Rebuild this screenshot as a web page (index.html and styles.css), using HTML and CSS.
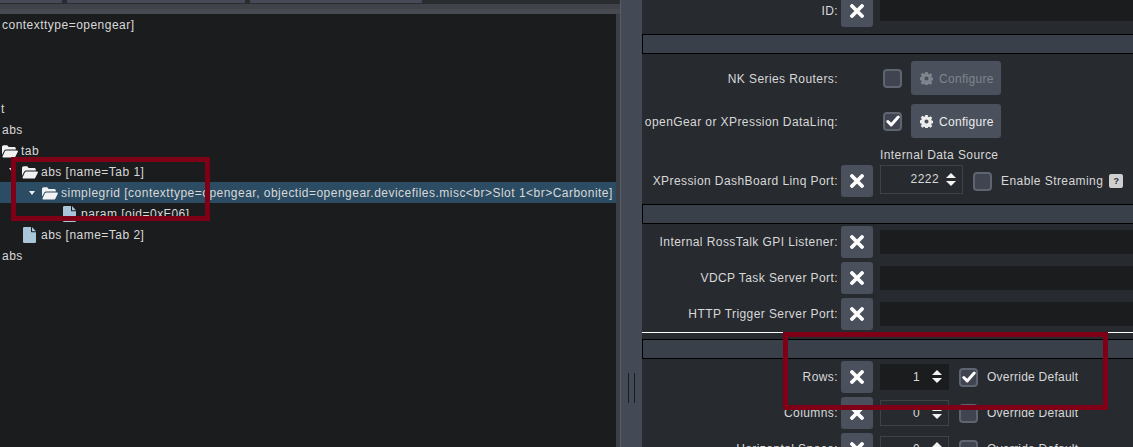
FILE: index.html
```html
<!DOCTYPE html>
<html lang="en">
<head>
<meta charset="utf-8">
<title>Layout editor</title>
<link rel="stylesheet" href="styles.css">
</head>
<body>
<svg class="defs" width="0" height="0" aria-hidden="true">
  <symbol id="x" viewBox="0 0 14 14"><path d="M2 2l10 10M12 2L2 12" fill="none" stroke="currentColor" stroke-width="3.8" stroke-linecap="round"/></symbol>
  <symbol id="check" viewBox="0 0 14 12"><path d="M1.8 6.5l3.4 3.4 7-7.8" fill="none" stroke="currentColor" stroke-width="3" stroke-linecap="round" stroke-linejoin="round"/></symbol>
  <symbol id="gear" viewBox="0 0 14 14"><path fill="currentColor" fill-rule="evenodd" d="M5.7 0h2.6l.4 2 1 .4 1.7-1.1 1.8 1.8-1.1 1.7.4 1 2 .4v2.6l-2 .4-.4 1 1.1 1.7-1.8 1.8-1.7-1.1-1 .4-.4 2H5.700l-.4-2-1-.4-1.700 1.100-1.800-1.800 1.100-1.700-.4-1-2-.4V5.700l2-.4.4-1-1.100-1.700 1.800-1.800 1.700 1.100 1-.4zM7 4.800a2.200 2.200 0 1 0 0 4.400 2.200 2.200 0 0 0 0-4.400z"/></symbol>
  <symbol id="open" viewBox="0 0 16 13"><path fill="currentColor" d="M0 2.200C0 1 .8.300 1.800.300h3.400l1.500 1.600h5.500c1 0 1.600.6 1.600 1.600v.9H4.200c-.9 0-1.500.4-1.900 1.100L0 9.700zM4.300 5.400H15c.8 0 1.200.7.800 1.300l-2.500 5c-.3.600-.8.9-1.500.9H1.500c-.8 0-1.200-.7-.9-1.300l2.300-5c.3-.6.800-.9 1.400-.9z"/></symbol>
  <symbol id="file" viewBox="0 0 13 16"><path fill="currentColor" d="M1.300 0H8v4.200c0 .6.400 1 1 1h4v9.500c0 .7-.6 1.300-1.300 1.300H1.300C.6 16 0 15.400 0 14.700V1.300C0 .6.600 0 1.300 0zM9 0l4 4.200H9z"/></symbol>
</svg>
<main class="app">
  <section class="left">
    <div class="tabs"><span class="tab t1"></span><span class="tab t2"></span><span class="tab t3"></span></div>
    <div class="band b1"></div>
    <div class="band b2"></div>
    <div class="tree">
      <div class="node">contexttype=opengear]</div>
      <div class="node"></div>
      <div class="node"></div>
      <div class="node"></div>
      <div class="node n-t">t</div>
      <div class="node">abs</div>
      <div class="node"><svg class="ico-open"><use href="#open"/></svg>tab</div>
      <div class="node lv1"><i class="arrow arrow-1"></i><svg class="ico-open"><use href="#open"/></svg>abs [name=Tab 1]</div>
      <div class="node lv2 sel"><i class="arrow"></i><svg class="ico-open"><use href="#open"/></svg>simplegrid [contexttype=opengear, objectid=opengear.devicefiles.misc&lt;br&gt;Slot 1&lt;br&gt;Carbonite]</div>
      <div class="node lv3"><svg class="ico-file"><use href="#file"/></svg>param [oid=0xF06]</div>
      <div class="node lv1f"><svg class="ico-file"><use href="#file"/></svg>abs [name=Tab 2]</div>
      <div class="node">abs</div>
    </div>
  </section>
  <div class="split"><div class="grip"></div></div>
  <section class="right">
    <div class="row r-id">
      <span class="label">ID:</span>
      <button class="xbtn"><svg><use href="#x"/></svg></button>
      <span class="field f-id"></span>
    </div>
    <div class="bar bar-1"></div>
    <div class="row r-cfg">
      <span class="label">NK Series Routers:</span>
      <span class="box box-cfg"></span>
      <button class="cfg off"><svg><use href="#gear"/></svg><span>Configure</span></button>
    </div>
    <div class="row r-cfg r-cfg2">
      <span class="label">openGear or XPression DataLinq:</span>
      <span class="box box-cfg"><svg><use href="#check"/></svg></span>
      <button class="cfg"><svg><use href="#gear"/></svg><span>Configure</span></button>
    </div>
    <div class="caption">Internal Data Source</div>
    <div class="row r-port">
      <span class="label">XPression DashBoard Linq Port:</span>
      <button class="xbtn"><svg><use href="#x"/></svg></button>
      <span class="num num-port">2222<i class="spin"></i></span>
      <span class="box box-port"></span>
      <span class="opt opt-wide">Enable Streaming</span>
      <span class="help">?</span>
    </div>
    <div class="bar bar-2"></div>
    <div class="row r-a">
      <span class="label">Internal RossTalk GPI Listener:</span>
      <button class="xbtn"><svg><use href="#x"/></svg></button>
      <span class="field"></span>
    </div>
    <div class="row r-b">
      <span class="label">VDCP Task Server Port:</span>
      <button class="xbtn"><svg><use href="#x"/></svg></button>
      <span class="field"></span>
    </div>
    <div class="row r-b">
      <span class="label">HTTP Trigger Server Port:</span>
      <button class="xbtn"><svg><use href="#x"/></svg></button>
      <span class="field"></span>
    </div>
    <div class="rule"></div>
    <div class="bar bar-3"></div>
    <div class="row r-a">
      <span class="label">Rows:</span>
      <button class="xbtn"><svg><use href="#x"/></svg></button>
      <span class="num num-on">1<i class="spin"></i></span>
      <span class="box box-grid"><svg><use href="#check"/></svg></span>
      <span class="opt">Override Default</span>
    </div>
    <div class="row r-b">
      <span class="label">Columns:</span>
      <button class="xbtn"><svg><use href="#x"/></svg></button>
      <span class="num">0<i class="spin"></i></span>
      <span class="box box-grid"></span>
      <span class="opt">Override Default</span>
    </div>
    <div class="row r-b">
      <span class="label">Horizontal Space:</span>
      <button class="xbtn"><svg><use href="#x"/></svg></button>
      <span class="num">0<i class="spin"></i></span>
      <span class="box box-grid"></span>
      <span class="opt">Override Default</span>
    </div>
  </section>
</main>
<div class="mark mark-left"></div>
<div class="mark mark-right"></div>
</body>
</html>
```
FILE: styles.css
```css
* { box-sizing: border-box; }
html, body { margin: 0; height: 447px; overflow: hidden; background: #272a2f; }
body {
  font-family: "Liberation Sans", Arial, sans-serif;
  font-size: 12px;
  letter-spacing: .42px;
  color: #d8d8d8;
}
.defs { position: absolute; }
.app { display: flex; width: 1133px; height: 447px; overflow: hidden; }

/* left pane */
.left { width: 620px; flex: none; background: #3b3e44; display: flex; flex-direction: column; overflow: hidden; }
.tabs { display: flex; gap: 5px; height: 4px; background: #2a2c30; flex: none; }
.tab { height: 3px; background: #464b57; display: block; }
.t1 { width: 62px; }
.t2 { width: 178px; }
.t3 { width: 172px; }
.band { flex: none; height: 5px; }
.b1 { background: #404349; }
.b2 { background: #474a50; height: 5px; }
.tree { width: 616px; flex: 1; background: #1b1c1e; overflow: hidden; letter-spacing: .48px; }
.node { height: 21px; display: flex; align-items: center; padding: 1px 0 0 2px; white-space: nowrap; position: relative; }
.n-t { padding-left: 1px; }
.node svg { color: #f2f2f2; flex: none; }
.ico-open { width: 16px; height: 13px; margin-right: 3px; }
.ico-file { width: 13px; height: 16px; margin-right: 5px; color: #a9c6d8 !important; }
.lv1 { padding-left: 22px; }
.lv2 { padding-left: 42px; }
.lv3 { padding-left: 63px; }
.lv1f { padding-left: 23px; }
.sel { background: #2b4c63; }
.arrow {
  position: absolute; left: 29px; top: 9px;
  border-left: 3px solid transparent; border-right: 3px solid transparent; border-top: 4px solid #f0f0f0;
}
.arrow-1 { left: 9px; top: 7px; }

/* splitter */
.split { width: 22px; flex: none; background: #434955; border-left: 1px solid #585c64; padding: 373px 0 0 7px; }
.grip { width: 7px; height: 30px; border-left: 1px solid #1b1c1e; border-right: 1px solid #1b1c1e; }

/* right pane */
.right { flex: 1; min-width: 0; margin-top: -5px; display: flex; flex-direction: column; }
.row { display: flex; align-items: center; flex: none; height: 32px; }
.label { width: 196px; flex: none; text-align: right; white-space: nowrap; margin-right: 3px; }
.xbtn {
  width: 32px; height: 32px; padding: 0; flex: none; border: 0; border-radius: 3px;
  background: #4a505c; color: #fff; display: flex; align-items: center; justify-content: center;
}
.xbtn svg { width: 14px; height: 14px; }
.field { flex: 1; margin-left: 7px; height: 24px; background: #1b1c1e; }
.f-id { height: 26px; align-self: flex-start; }
.bar { flex: none; height: 20px; background: #39404a; border: 1px solid #000; border-right: 0; }
.bar-1 { margin-top: 7px; }
.bar-2 { margin-top: 7px; }
.bar-3 { margin-top: 6px; }
.r-cfg { height: 34px; margin-top: 7px; }
.r-cfg .label { padding-top: 1px; }
.r-cfg2 { margin-top: 9px; }
.box {
  width: 19px; height: 19px; flex: none; border: 2px solid #5f6570; border-radius: 4px; background: #3f4450;
  color: #fff; display: flex; align-items: center; justify-content: center;
}
.box svg { width: 14px; height: 12px; }
.box-cfg { margin-left: 42px; }
.cfg {
  width: 90px; height: 34px; margin-left: 9px; padding: 0 0 0 9px; border: 0; border-radius: 3px;
  background: #4a505c; color: #ececec; font: inherit; letter-spacing: .3px;
  display: flex; align-items: center; gap: 6px;
}
.cfg span { padding-top: 1px; }
.cfg svg { width: 13px; height: 13px; flex: none; }
.cfg.off { color: #80858d; }
.caption { margin: 10px 0 0 238px; height: 17px; line-height: 14px; flex: none; }
.r-port { margin-top: 0; }
.num {
  position: relative; flex: none; width: 69px; height: 26px; margin-left: 7px; padding: 0 28px 0 0;
  border: 1px solid #3f4247; text-align: right; line-height: 24px; align-self: center;
}
.num-on { background: #1b1c1e; border-color: #1b1c1e; }
.num-port { width: 83px; height: 29px; line-height: 27px; padding-right: 23px; align-self: flex-start; }
.spin {
  position: absolute; right: 6px; top: 50%; margin-top: -7px; width: 10px; height: 13px;
}
.spin::before, .spin::after { content: ""; position: absolute; left: 0; border-left: 5px solid transparent; border-right: 5px solid transparent; }
.spin::before { top: 0; border-bottom: 5px solid #f2f2f2; }
.spin::after { bottom: 0; border-top: 5px solid #f2f2f2; }
.box-port { margin-left: 10px; }
.box-grid { margin-left: 10px; }
.opt { margin-left: 9px; white-space: nowrap; letter-spacing: .25px; }
.opt-wide { letter-spacing: .43px; }
.help {
  width: 14px; height: 14px; margin-left: 6px; background: #cfcfcf; color: #2a2c30; border-radius: 2px;
  font-size: 9px; font-weight: 700; letter-spacing: 0; display: flex; align-items: center; justify-content: center; flex: none;
}
.r-a { margin-top: 2px; }
.r-b { margin-top: 4px; }
.rule { flex: none; height: 1px; background: #fff; margin-top: 2px; }

/* annotation frames */
.mark { position: absolute; border: 5px solid #7f0016; }
.mark-left { left: 11px; top: 157px; width: 199px; height: 64px; }
.mark-right { left: 783px; top: 332px; width: 325px; height: 78px; }
```
